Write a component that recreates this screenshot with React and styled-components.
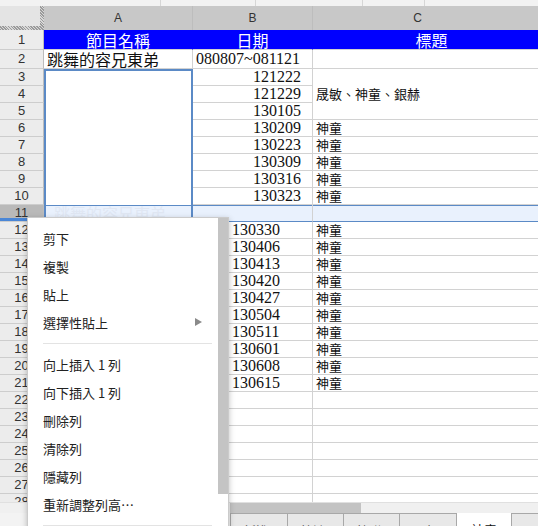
import React from 'react';
import styled, { createGlobalStyle } from 'styled-components';

const GlobalStyle = createGlobalStyle`
  html, body {
    margin: 0;
    padding: 0;
    overflow: hidden;
    background: #fff;
  }
`;

const cjk = `"Noto Sans CJK TC", "Noto Sans", sans-serif`;
const serif = `"Liberation Serif", "Noto Sans CJK TC", serif`;
const ui = `"Liberation Sans", Arial, sans-serif`;

const selBlue = '#5b8ac6';

const Page = styled.div`
  position: relative;
  width: 538px;
  height: 526px;
  overflow: hidden;
  display: flex;
  flex-direction: column;
  background: #fff;
`;

const TopStrip = styled.div`
  height: 6px;
  display: flex;
  background: #f2f2f2;
  flex-shrink: 0;
`;

const StripPart = styled.div`
  width: ${(p) => p.$w}px;
  border-right: 1px solid #d6d6d6;
  box-sizing: border-box;
  flex-shrink: 0;
`;

const SheetArea = styled.div`
  height: 496px;
  overflow: hidden;
  flex-shrink: 0;
`;

const Table = styled.table`
  table-layout: fixed;
  border-collapse: separate;
  border-spacing: 0;
  width: 551px;
`;

const Corner = styled.th`
  height: 24px;
  padding: 0;
  box-sizing: border-box;
  background:
    repeating-linear-gradient(45deg, #9a9a9a 0 1px, #d8d8d8 1px 2px) right / 4px 100% no-repeat,
    repeating-linear-gradient(45deg, #9a9a9a 0 1px, #d8d8d8 1px 2px) bottom / 100% 4px no-repeat,
    #e4e4e4;
`;

const ColHead = styled.th`
  height: 24px;
  padding: 0 ${(p) => p.$pr || 0}px 0 0;
  box-sizing: border-box;
  background: #c8c8c8;
  border-right: 1px solid #bdbdbd;
  font-family: ${ui};
  font-weight: normal;
  font-size: 12px;
  color: #333;
  text-align: center;
`;

const Row = styled.tr`
  height: ${(p) => p.$h}px;
`;

const RowHead = styled.td`
  padding: 0;
  background: ${(p) => (p.$sel ? '#b9b9b9' : '#ececec')};
  border-right: 1px solid #bcbcbc;
  border-bottom: 1px solid #cdcdcd;
  font-family: ${ui};
  font-size: 13px;
  color: #333;
  text-align: center;
  line-height: 14px;
`;

const Cell = styled.td`
  padding: 0 ${(p) => p.$pr ?? 3}px 0 ${(p) => p.$pl ?? 3}px;
  border-right: 1px solid #d2d2d2;
  border-bottom: 1px solid #d2d2d2;
  background: #fff;
  font-family: ${serif};
  font-size: 16px;
  color: #111;
  white-space: nowrap;
  overflow: hidden;
  line-height: 16px;
  text-align: ${(p) => p.$align || 'left'};
  vertical-align: middle;
`;

const TitleCell = styled(Cell)`
  background: #0000ff;
  color: #fff;
  font-family: ${cjk};
  font-size: 16px;
  line-height: 18px;
  text-align: center;
  border-right-color: #0000ff;
  border-bottom-color: #d2d2d2;
`;

const NameCell = styled(Cell)`
  font-family: ${cjk};
  font-size: 16px;
  line-height: 18px;
`;

const TextCell = styled(Cell)`
  font-family: ${cjk};
  font-size: 13px;
`;

const MergedSel = styled(Cell)`
  box-shadow: inset 2px 0 0 ${selBlue}, inset -1px 0 0 ${selBlue}, inset 0 2px 0 ${selBlue};
  border-right-color: ${selBlue};
  border-bottom: none;
`;

const HiCell = styled(Cell)`
  background: #e9f1fd;
  border-bottom: 1px solid ${selBlue};
  border-right-color: ${(p) => (p.$edge ? selBlue : '#d2d2d2')};
  box-shadow: inset 0 1px 0 ${selBlue}${(p) => (p.$edge ? `, inset 2px 0 0 ${selBlue}, inset -1px 0 0 ${selBlue}` : '')};
  font-family: ${cjk};
  font-size: 16px;
  color: #e0e7f3;
  padding-left: 10px;
`;

const HScroll = styled.div`
  height: 11px;
  background: #f0f0f0;
  border-top: 1px solid #e0e0e0;
  box-sizing: border-box;
  flex-shrink: 0;
  padding-left: 230px;
`;

const HThumb = styled.div`
  width: 131px;
  height: 100%;
  background: #c3c3c3;
`;

const TabBar = styled.div`
  flex: 1;
  display: flex;
  padding-left: 230px;
  background: #f3f3f3;
  overflow: hidden;
  align-items: flex-start;
`;

const Tab = styled.div`
  flex-shrink: 0;
  width: ${(p) => p.$w}px;
  height: 24px;
  box-sizing: border-box;
  border: 1px solid #a8a8a8;
  border-left: ${(p) => (p.$first ? '1px solid #a8a8a8' : 'none')};
  border-top: ${(p) => (p.$active ? 'none' : '1px solid #a8a8a8')};
  background: ${(p) => (p.$active ? '#fff' : '#e8e8e8')};
  font-family: ${cjk};
  font-size: 13px;
  color: ${(p) => (p.$active ? '#111' : '#555')};
  padding: 7px 0 0 ${(p) => (p.$active ? 14 : 12)}px;
`;

const DragLine = styled.div`
  position: absolute;
  left: 0;
  top: 218px;
  width: 200px;
  height: 3px;
  background: #4a86d6;
`;

const Menu = styled.div`
  position: absolute;
  left: 27px;
  top: 217px;
  width: 202px;
  height: 330px;
  box-sizing: border-box;
  background: #fff;
  border: 1px solid #cbcbcb;
  box-shadow: 0 2px 6px rgba(0, 0, 0, 0.25);
  display: flex;
`;

const MenuList = styled.div`
  flex: 1;
  padding-top: 6px;
`;

const MenuItem = styled.div`
  height: 28px;
  display: flex;
  align-items: center;
  justify-content: space-between;
  padding: 0 16px 0 15px;
  font-family: ${cjk};
  font-size: 13px;
  color: #222;
`;

const Arrow = styled.span`
  width: 0;
  height: 0;
  border-top: 4px solid transparent;
  border-bottom: 4px solid transparent;
  border-left: 7px solid #8a8a8a;
`;

const Separator = styled.div`
  height: 1px;
  background: #e3e3e3;
  margin: 7px 6px 6px 15px;
`;

const MenuScroll = styled.div`
  width: 10px;
`;

const MenuThumb = styled.div`
  height: 276px;
  background: #c4c4c4;
`;

const bDates = ['121222', '121229', '130105', '130209', '130223', '130309', '130316', '130323'];
const lowDates = ['130330', '130406', '130413', '130420', '130427', '130504', '130511', '130601', '130608', '130615'];

const menuTop = ['剪下', '複製', '貼上'];
const menuBottom = ['向上插入 1 列', '向下插入 1 列', '刪除列', '清除列', '隱藏列', '重新調整列高…'];
const tabs = [
  { name: '新進', w: 58 },
  { name: '韓流', w: 56 },
  { name: '韓聯', w: 56 },
  { name: '張仁', w: 57 },
  { name: '神童', w: 55, active: true },
  { name: '日韓', w: 56 },
];

const App = () => {
  const rows = [];

  rows.push(
    <Row key={1} $h={20}>
      <RowHead>1</RowHead>
      <TitleCell>節目名稱</TitleCell>
      <TitleCell>日期</TitleCell>
      <TitleCell>標題</TitleCell>
    </Row>
  );
  rows.push(
    <Row key={2} $h={19}>
      <RowHead>2</RowHead>
      <NameCell>跳舞的容兄東弟</NameCell>
      <Cell>080807~081121</Cell>
      <Cell />
    </Row>
  );
  bDates.forEach((d, i) => {
    const n = i + 3;
    rows.push(
      <Row key={n} $h={17}>
        <RowHead>{n}</RowHead>
        {i === 0 && <MergedSel rowSpan={8} />}
        <Cell $align="right" $pr={11}>{d}</Cell>
        {i === 0 && <TextCell rowSpan={3}>晟敏、神童、銀赫</TextCell>}
        {i >= 3 && <TextCell>神童</TextCell>}
      </Row>
    );
  });
  rows.push(
    <Row key={11} $h={17}>
      <RowHead $sel>11</RowHead>
      <HiCell $edge>跳舞的容兄東弟</HiCell>
      <HiCell />
      <HiCell />
    </Row>
  );
  lowDates.forEach((d, i) => {
    const n = i + 12;
    rows.push(
      <Row key={n} $h={17}>
        <RowHead>{n}</RowHead>
        <Cell />
        <Cell $pl={39}>{d}</Cell>
        <TextCell>神童</TextCell>
      </Row>
    );
  });
  for (let n = 22; n <= 28; n++) {
    rows.push(
      <Row key={n} $h={17}>
        <RowHead>{n}</RowHead>
        <Cell />
        <Cell />
        <Cell />
      </Row>
    );
  }

  return (
    <Page>
      <GlobalStyle />
      <TopStrip>
        <StripPart $w={161} />
        <StripPart $w={95} />
        <StripPart $w={107} />
        <StripPart $w={62} />
      </TopStrip>
      <SheetArea>
        <Table>
          <colgroup>
            <col style={{ width: 44 }} />
            <col style={{ width: 149 }} />
            <col style={{ width: 120 }} />
            <col style={{ width: 238 }} />
          </colgroup>
          <thead>
            <tr>
              <Corner />
              <ColHead>A</ColHead>
              <ColHead>B</ColHead>
              <ColHead $pr={28}>C</ColHead>
            </tr>
          </thead>
          <tbody>{rows}</tbody>
        </Table>
      </SheetArea>
      <HScroll>
        <HThumb />
      </HScroll>
      <TabBar>
        {tabs.map((t, i) => (
          <Tab key={t.name} $w={t.w} $first={i === 0} $active={t.active}>
            {t.name}
          </Tab>
        ))}
      </TabBar>

      <DragLine />
      <Menu>
        <MenuList>
          {menuTop.map((m) => (
            <MenuItem key={m}>{m}</MenuItem>
          ))}
          <MenuItem>
            選擇性貼上
            <Arrow />
          </MenuItem>
          <Separator />
          {menuBottom.map((m) => (
            <MenuItem key={m}>{m}</MenuItem>
          ))}
          <Separator />
        </MenuList>
        <MenuScroll>
          <MenuThumb />
        </MenuScroll>
      </Menu>
    </Page>
  );
};

export default App;
